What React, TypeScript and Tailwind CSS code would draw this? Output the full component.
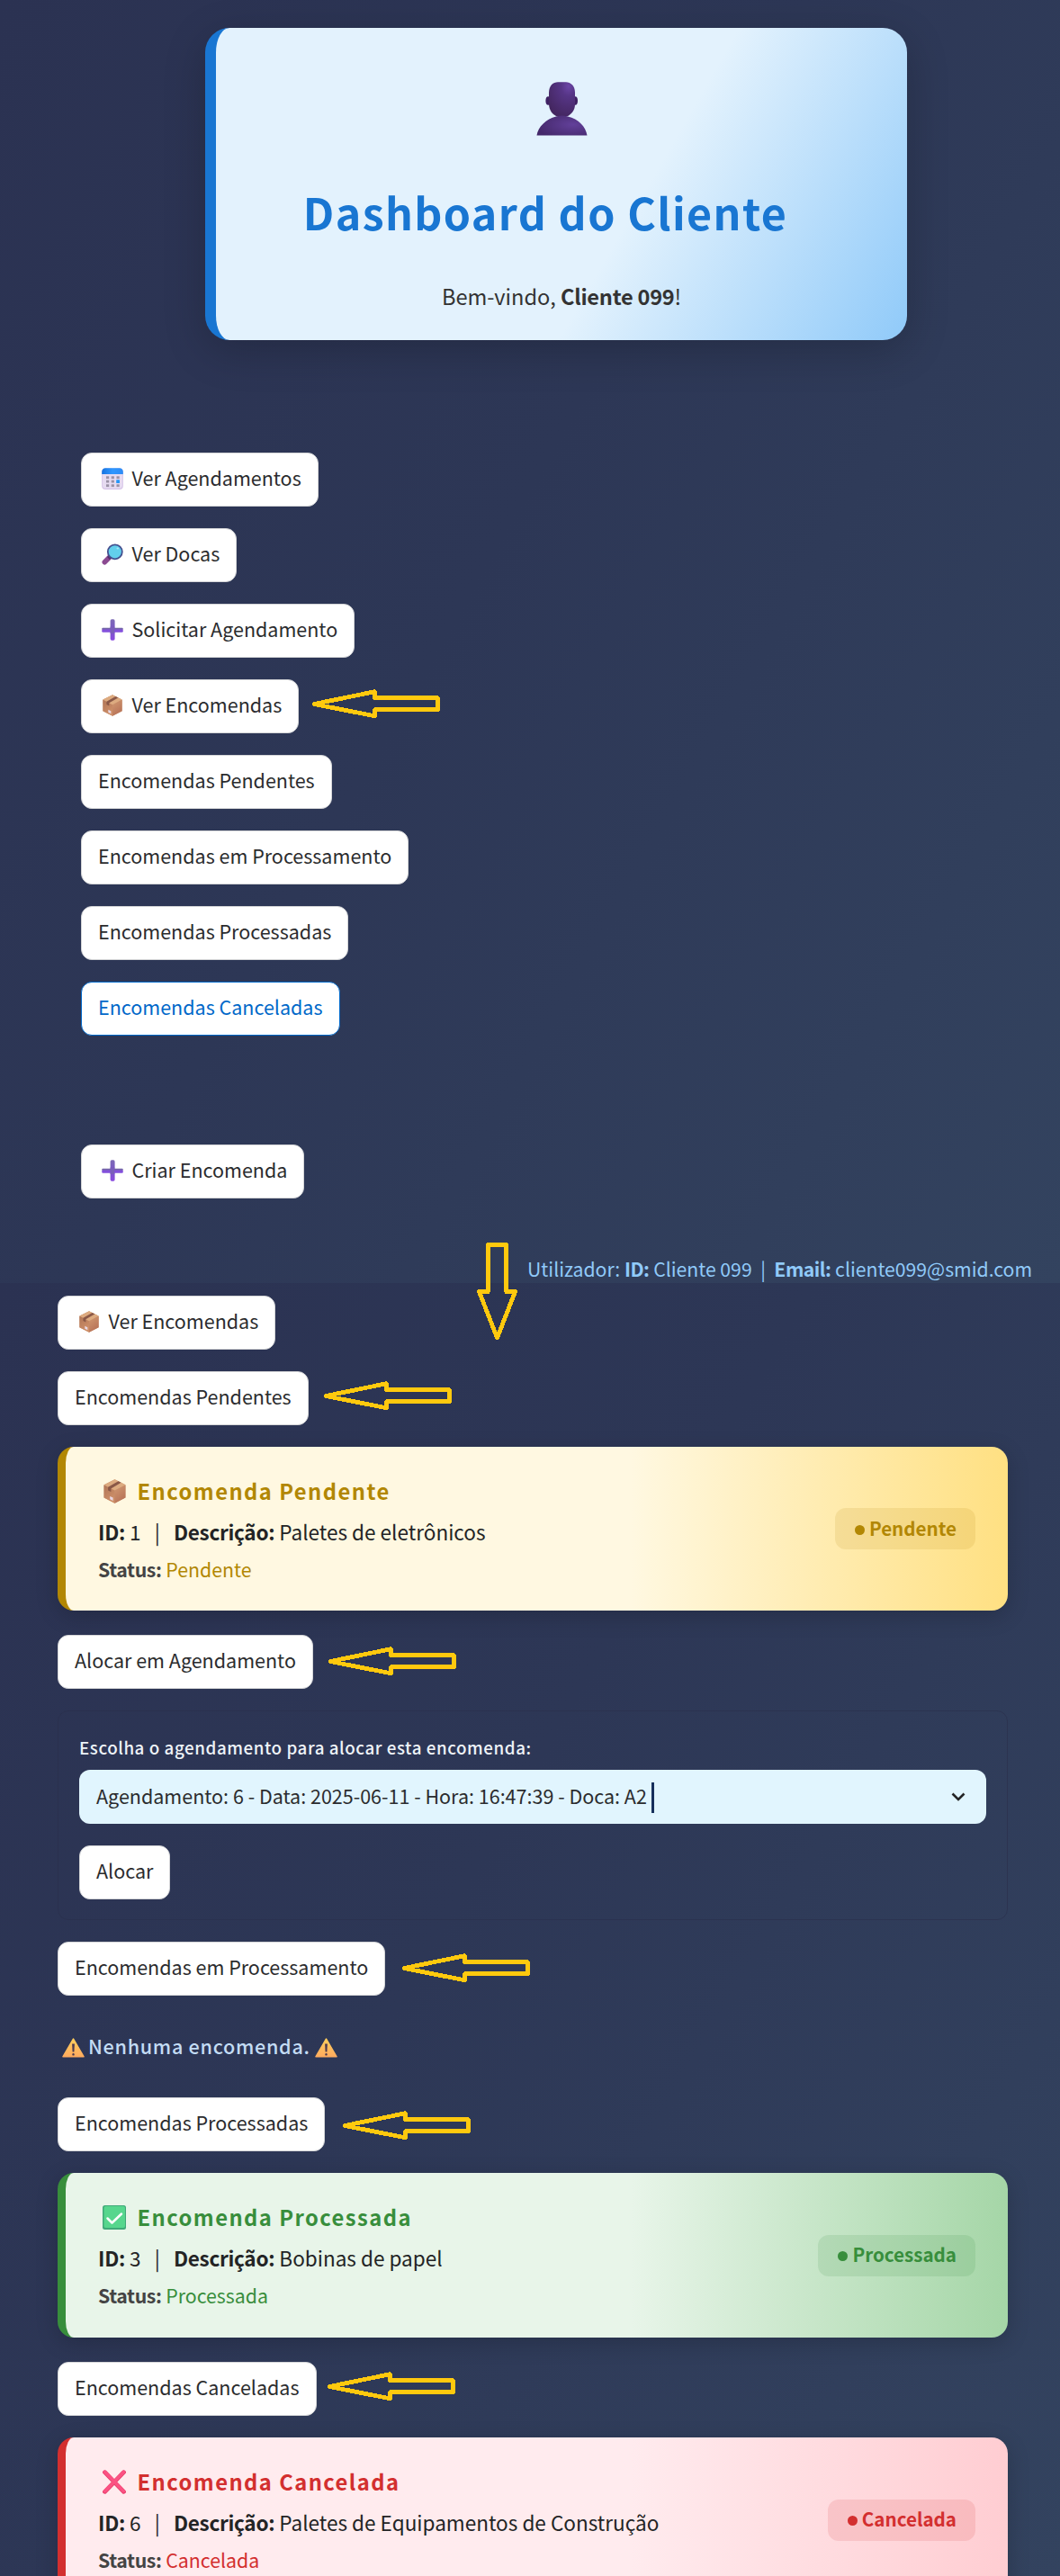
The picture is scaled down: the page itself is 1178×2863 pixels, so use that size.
import React, { type ReactNode } from 'react';

function UserIcon() {
  return (
    <svg className="h-[60px] w-[57px] shrink-0" viewBox="0 0 57 60">
      <defs>
        <radialGradient id="userHead" cx="0.75" cy="0.12" r="0.95">
          <stop offset="0" stopColor="#6b45a5" />
          <stop offset="0.3" stopColor="#563586" />
          <stop offset="1" stopColor="#43265f" />
        </radialGradient>
        <radialGradient id="userBody" cx="0.72" cy="0.45" r="0.75">
          <stop offset="0" stopColor="#62409a" />
          <stop offset="1" stopColor="#44286a" />
        </radialGradient>
      </defs>
      <ellipse cx="13.2" cy="21" rx="2.8" ry="4.8" fill="#3f2163" />
      <ellipse cx="43.2" cy="21" rx="2.8" ry="4.8" fill="#3f2163" />
      <path d="M14 12C14 4 19 .3 24 .3h9c5 0 10 4 10 11.7V25c0 7-4.500 11.200-8.500 13.300h-12C18 36 14.500 32 14 25Z" fill="url(#userHead)" />
      <path d="M22 38.500c4-1.300 9-1.300 13 0C47 41 55 50 56.500 59.500H.500C2 50 11 41 22 38.500Z" fill="url(#userBody)" />
    </svg>
  );
}

function CalendarIcon() {
  return (
    <svg className="size-6 shrink-0" viewBox="0 0 24 24">
      <defs>
        <linearGradient id="calTop" x1="0" x2="1" y1="0" y2="0">
          <stop offset="0" stopColor="#1673e0" />
          <stop offset="0.5" stopColor="#2f97ff" />
          <stop offset="1" stopColor="#2e8bf5" />
        </linearGradient>
      </defs>
      <rect x="0.200" y="0.500" width="23.600" height="23.500" rx="4" fill="#d3bfe6" />
      <rect x="1" y="2" width="22" height="21" rx="3.500" fill="#e6dbf1" />
      <path d="M.2 7V4.500A4 4 0 0 1 4.200.3h15.600a4 4 0 0 1 4 4.200V7Z" fill="url(#calTop)" />
      <g fill="#9b92a6">
        <rect x="5" y="9.300" width="3.200" height="2.800" />
        <rect x="10.700" y="9.300" width="3.200" height="2.800" />
        <rect x="16.500" y="9.300" width="3.200" height="2.800" />
        <rect x="5" y="13.700" width="3.200" height="2.800" />
        <rect x="10.700" y="13.700" width="3.200" height="2.800" />
        <rect x="5" y="18.300" width="3.200" height="2.800" />
        <rect x="10.700" y="18.300" width="3.200" height="2.800" />
        <rect x="16.500" y="18.300" width="3.200" height="2.800" />
      </g>
      <rect x="16.200" y="13.200" width="3.800" height="3.700" rx="0.500" fill="#2596f8" />
    </svg>
  );
}

function SearchIcon() {
  return (
    <svg className="size-6 shrink-0" viewBox="0 0 24 24">
      <path d="M3.300 20.700 8.500 15.500" stroke="#8b4a91" strokeWidth="5.600" strokeLinecap="round" />
      <path d="M7.500 16.500 9.500 14.500" stroke="#5b2c68" strokeWidth="4" />
      <circle cx="14.800" cy="9.300" r="8" fill="#62cfec" stroke="#45508f" strokeWidth="1.800" />
      <ellipse cx="17.800" cy="5.600" rx="1.300" ry="1" fill="#a6e6f8" />
    </svg>
  );
}

function PlusIcon() {
  return (
    <svg className="size-6 shrink-0" viewBox="0 0 24 24">
      <defs>
        <linearGradient id="plusFill" x1="0" x2="0" y1="0" y2="1">
          <stop offset="0" stopColor="#7d6bb5" />
          <stop offset="0.500" stopColor="#7a55c6" />
          <stop offset="1" stopColor="#8a4be0" />
        </linearGradient>
      </defs>
      <rect x="9.600" y="0.300" width="5" height="23.400" rx="1.600" fill="url(#plusFill)" />
      <rect x="0.200" y="9.800" width="23.600" height="2.500" rx="1.200" fill="#7567a8" />
      <rect x="0.200" y="11.500" width="23.600" height="3.300" rx="1.400" fill="#8350dc" />
      <rect x="9.600" y="8.500" width="4.600" height="7.500" fill="#7a5dba" />
    </svg>
  );
}

function BoxIcon({ className = 'size-6' }: { className?: string }) {
  return (
    <svg className={`${className} shrink-0`} viewBox="0 0 24 24">
      <defs>
        <linearGradient id="boxLeft" x1="0" x2="0.500" y1="0" y2="1">
          <stop offset="0" stopColor="#b07557" />
          <stop offset="1" stopColor="#cf9069" />
        </linearGradient>
        <linearGradient id="boxRight" x1="0" x2="0.500" y1="0" y2="1">
          <stop offset="0" stopColor="#d29a72" />
          <stop offset="1" stopColor="#b87358" />
        </linearGradient>
      </defs>
      <path d="M12 .3 22.600 5.500V18.200L12 23.800 1.400 18.200V5.500Z" fill="#c48a66" />
      <path d="M1.400 5.800 12 11.300V23.800L1.400 18.200Z" fill="url(#boxLeft)" />
      <path d="M22.600 5.800 12 11.300V23.800L22.600 18.200Z" fill="url(#boxRight)" />
      <path d="M12 .3 22.600 5.600 12 11.200 1.400 5.600Z" fill="#ddab80" />
      <path d="M15.500 2 18.300 3.400 8.300 9.300V12.500L5.400 11V7.700Z" fill="#8a5847" />
      <path d="M7.300 16.800 10.300 18.300V21.300L7.300 19.800Z" fill="#e9d8e4" />
    </svg>
  );
}

function CheckIcon() {
  return (
    <svg className="h-[27px] w-[26px] shrink-0" viewBox="0 0 26 27">
      <rect width="26" height="27" rx="2.500" fill="#3fa878" />
      <rect x="1.500" y="1" width="23.500" height="24" rx="2" fill="#56d68d" />
      <path d="M5.500 14.500 10.500 19.500 21 9.500" fill="none" stroke="#fff" strokeWidth="2.500" strokeLinecap="round" strokeLinejoin="round" />
    </svg>
  );
}

function CrossIcon() {
  return (
    <svg className="h-[27px] w-[26px] shrink-0" viewBox="0 0 26 27">
      <g strokeLinecap="round">
        <path d="M2.500 2.700 23.500 24.300M23.500 2.700 2.500 24.300" stroke="#e83b69" strokeWidth="4.800" />
        <path d="M2.700 2.500 23.300 23.700M23.300 2.500 2.700 23.700" stroke="#fb5283" strokeWidth="3.600" />
      </g>
    </svg>
  );
}

function WarningIcon() {
  return (
    <svg className="h-[22px] w-[25px] shrink-0" viewBox="0 0 25 22">
      <defs>
        <linearGradient id="warnFill" x1="0" x2="0" y1="0" y2="1">
          <stop offset="0" stopColor="#ffce5c" />
          <stop offset="1" stopColor="#ffab5e" />
        </linearGradient>
      </defs>
      <path d="M12.500 1.200 24 20.800H1Z" fill="url(#warnFill)" stroke="url(#warnFill)" strokeWidth="1.600" strokeLinejoin="round" />
      <path d="M11.100 6.500h2.800L13.400 15.600h-1.800Z" fill="#4c3a4e" />
      <rect x="11.300" y="17" width="2.400" height="2.600" rx="1.200" fill="#4c3a4e" />
    </svg>
  );
}

function LeftArrow({ className }: { className: string }) {
  return (
    <svg className={`${className} h-[33px] w-[143px] shrink-0`} viewBox="0 0 143 33" shapeRendering="crispEdges">
      <path
        d="M3 16.500 70.500 2.700V9.700H140.500V22.800H70.500V29.800Z"
        fill="none"
        stroke="#ffc90e"
        strokeWidth="4.800"
        strokeLinejoin="round"
      />
    </svg>
  );
}

function DownArrow() {
  return (
    <svg className="absolute top-[1381px] left-[530px] h-[109px] w-[45px]" viewBox="0 0 45 109" shapeRendering="crispEdges">
      <path
        d="M12.400 2.500H32.600V54.500H42.500L22.500 106 2.500 54.500H12.400Z"
        fill="none"
        stroke="#ffc90e"
        strokeWidth="4.800"
        strokeLinejoin="round"
      />
    </svg>
  );
}

function Btn({ icon, active, children }: { icon?: ReactNode; active?: boolean; children: ReactNode }) {
  const tone = active ? 'border-[#0068c9] text-[#0068c9]' : 'border-[#d5d6d8] text-[#2b2c2e]';
  return (
    <button
      className={`${tone} flex h-[60px] shrink-0 items-center rounded-xl border bg-white px-[18px] text-[21.5px] leading-[30px] whitespace-nowrap`}
    >
      {icon && <span className="-mt-[3px] mr-[9.5px] ml-1">{icon}</span>}
      <span className="mb-[5px]">{children}</span>
    </button>
  );
}

type CardProps = {
  frame: string;
  accent: string;
  badge: string;
  dot: string;
  icon: ReactNode;
  title: string;
  id: number;
  description: string;
  status: string;
};

function OrderCard({ frame, accent, badge, dot, icon, title, id, description, status }: CardProps) {
  return (
    <article
      className={`${frame} mb-[3px] flex w-[1056px] shrink-0 items-center justify-between rounded-[18px] border-l-[9px] pr-9 pl-9 shadow-[0_6px_24px_rgba(0,0,0,0.18)]`}
    >
      <div className="h-full pt-[33px] whitespace-nowrap">
        <h3 className={`${accent} flex h-8 items-center text-[23.75px] leading-8 font-bold tracking-[1.45px]`}>
          <span className="mr-[12.5px] ml-[5px] flex w-[26px] justify-center">{icon}</span>
          {title}
        </h3>
        <p className="mt-[13px] text-[22.55px] leading-8 text-[#232425]">
          <b className="font-bold tracking-[-0.3px]">ID:</b> {id}
          {' \u00a0 |\u00a0 \u00a0'}
          <b className="font-bold tracking-[-0.3px]">Descrição:</b> {description}
        </p>
        <p className="mt-[10px] text-[21.3px] leading-8 text-[#444]">
          <b className="font-bold tracking-[-0.4px]">Status:</b> <span className={accent}>{status}</span>
        </p>
      </div>
      <div className={`${badge} flex h-[46px] items-center rounded-xl pr-[21px] pl-[22px]`}>
        <span className={`${dot} mt-[2px] mr-[5px] size-[11px] rounded-full`} />
        <span className="mb-[3px] text-[20.6px] leading-[30px] font-bold">{status}</span>
      </div>
    </article>
  );
}

export default function App() {
  return (
    <div className="relative w-[1178px] overflow-hidden font-['Noto_Sans_CJK_SC','Noto_Sans',sans-serif]">
      <section className="flex h-[1426px] flex-col bg-[linear-gradient(120deg,#2b3252_0%,#2d3756_45%,#33435f_100%)] pt-[31px]">
        <header className="ml-[228px] flex h-[347px] w-[780px] shrink-0 flex-col items-center rounded-[27px] border-l-[12px] border-[#1976d2] bg-[linear-gradient(120deg,#e3f2fd_60%,#90caf9_100%)] pt-[60px] shadow-[0_12px_48px_rgba(0,0,0,0.2)]">
          <UserIcon />
          <h1 className="mt-[54px] mr-[36px] text-[48.35px] leading-[60px] font-bold tracking-[1.4px] text-[#1976d2]">
            Dashboard do Cliente
          </h1>
          <p className="mt-[46px] text-[23.6px] leading-9 text-[#333]">
            Bem-vindo, <b className="font-bold tracking-[-0.25px]">Cliente 099</b>!
          </p>
        </header>

        <nav className="mt-[125px] ml-[90px] flex flex-col items-start gap-6">
          <Btn icon={<CalendarIcon />}>Ver Agendamentos</Btn>
          <Btn icon={<SearchIcon />}>Ver Docas</Btn>
          <Btn icon={<PlusIcon />}>Solicitar Agendamento</Btn>
          <div className="flex">
            <Btn icon={<BoxIcon />}>Ver Encomendas</Btn>
            <LeftArrow className="mt-[11px] ml-[14px]" />
          </div>
          <Btn>Encomendas Pendentes</Btn>
          <Btn>Encomendas em Processamento</Btn>
          <Btn>Encomendas Processadas</Btn>
          <Btn active>Encomendas Canceladas</Btn>
        </nav>

        <div className="mt-[121px] ml-[90px] flex">
          <Btn icon={<PlusIcon />}>Criar Encomenda</Btn>
        </div>

        <footer className="mt-[63px] pr-[31px] text-right text-[21.2px] leading-[30px] text-[#90caf9]">
          Utilizador: <b className="font-bold tracking-[-0.5px]">ID:</b> Cliente 099
          {' \u00a0|\u00a0 '}
          <b className="font-bold tracking-[-0.5px]">Email:</b> cliente099@smid.com
        </footer>
      </section>

      <DownArrow />

      <section className="flex h-[1437px] flex-col items-start gap-6 overflow-hidden bg-[linear-gradient(120deg,#2b3252_0%,#2d3756_45%,#33435f_100%)] pt-[14px] pl-16">
        <Btn icon={<BoxIcon />}>Ver Encomendas</Btn>
        <div className="flex">
          <Btn>Encomendas Pendentes</Btn>
          <LeftArrow className="mt-[11px] ml-4" />
        </div>
        <OrderCard
          frame="h-[182px] border-[#b28704] bg-[linear-gradient(90deg,#fff8e1_60%,#ffe082_100%)]"
          accent="text-[#b28704]"
          badge="bg-[#b28704]/13 text-[#b28704]"
          dot="bg-[#b28704]"
          icon={<BoxIcon className="size-[27px]" />}
          title="Encomenda Pendente"
          id={1}
          description="Paletes de eletrônicos"
          status="Pendente"
        />
        <div className="flex">
          <Btn>Alocar em Agendamento</Btn>
          <LeftArrow className="mt-[13px] ml-4" />
        </div>
        <form className="flex h-[233px] w-[1056px] shrink-0 flex-col items-start rounded-xl border border-[#2a2f4b]/60 px-[23px] pt-[26px]">
          <label className="text-[18.8px] leading-7 font-medium tracking-[0.55px] text-[#eef3f8]">
            Escolha o agendamento para alocar esta encomenda:
          </label>
          <div className="mt-[11px] flex h-[60px] w-full shrink-0 items-center rounded-xl bg-[#e1f5fe] pr-[20px] pl-[19px]">
            <span className="mb-[3px] text-[21.5px] leading-[30px] text-[#2b2c2e]">
              Agendamento: 6 - Data: 2025-06-11 - Hora: 16:47:39 - Doca: A2
            </span>
            <span className="mt-[1px] ml-[5px] h-[34px] w-[3px] bg-[#17305c]" />
            <svg className="ml-auto size-[22px]" viewBox="0 0 22 22">
              <path d="M4.500 7.500 11 14 17.500 7.500" fill="none" stroke="#232425" strokeWidth="2.600" />
            </svg>
          </div>
          <div className="mt-6 flex">
            <Btn>Alocar</Btn>
          </div>
        </form>
        <div className="flex">
          <Btn>Encomendas em Processamento</Btn>
          <LeftArrow className="mt-[13px] ml-[18px]" />
        </div>
        <p className="flex h-[65px] shrink-0 pt-4 pl-[5px] text-[21.6px] leading-8 font-medium tracking-[0.7px] text-[#c3dcf4]">
          <span className="mt-[7px]">
            <WarningIcon />
          </span>
          <span className="mr-[5px] ml-[4px]">Nenhuma encomenda.</span>
          <span className="mt-[7px]">
            <WarningIcon />
          </span>
        </p>
        <div className="flex">
          <Btn>Encomendas Processadas</Btn>
          <LeftArrow className="mt-[15px] ml-[19px]" />
        </div>
        <OrderCard
          frame="h-[183px] border-[#388e3c] bg-[linear-gradient(90deg,#e8f5e9_60%,#a5d6a7_100%)]"
          accent="text-[#388e3c]"
          badge="bg-[#388e3c]/13 text-[#388e3c]"
          dot="bg-[#388e3c]"
          icon={<CheckIcon />}
          title="Encomenda Processada"
          id={3}
          description="Bobinas de papel"
          status="Processada"
        />
        <div className="flex">
          <Btn>Encomendas Canceladas</Btn>
          <LeftArrow className="mt-[11px] ml-[11px]" />
        </div>
        <OrderCard
          frame="h-[183px] border-[#d32f2f] bg-[linear-gradient(90deg,#ffebee_60%,#ffcdd2_100%)]"
          accent="text-[#d32f2f]"
          badge="bg-[#d32f2f]/13 text-[#d32f2f]"
          dot="bg-[#d32f2f]"
          icon={<CrossIcon />}
          title="Encomenda Cancelada"
          id={6}
          description="Paletes de Equipamentos de Construção"
          status="Cancelada"
        />
      </section>
    </div>
  );
}
